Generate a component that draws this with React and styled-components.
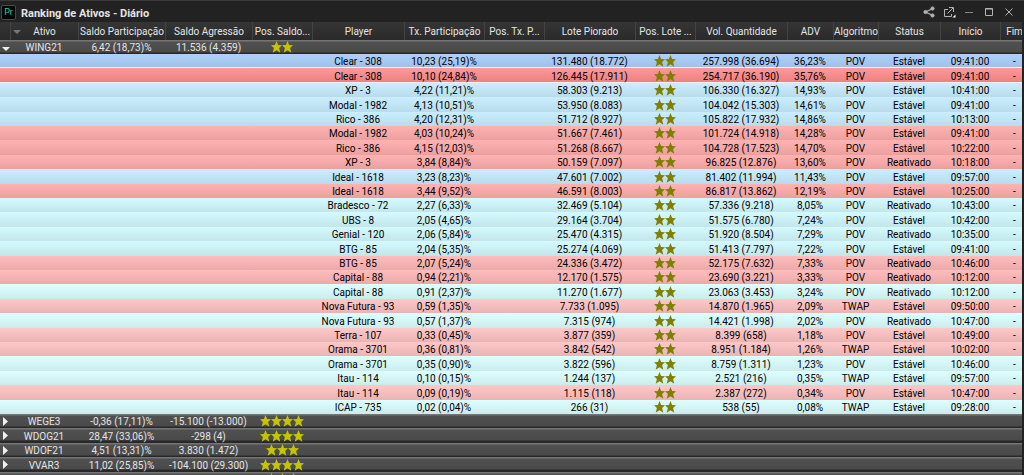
import React from 'react';
import styled, { createGlobalStyle, css } from 'styled-components';

const GlobalStyle = createGlobalStyle`
  body {
    margin: 0;
    background: #222;
  }
`;

const Window = styled.main`
  height: 100vh;
  box-sizing: border-box;
  padding-right: 2px;
  border-top: 1px solid #3a3a3a;
  overflow: hidden;
  background: #222;
  color: #e4e4e4;
  font-family: Roboto, sans-serif;
  font-size: 10px;
`;

const TitleBar = styled.header`
  display: flex;
  align-items: center;
  height: 21px;
  box-sizing: border-box;
  padding: 1px 3px 0 1px;
`;

const Logo = styled.span`
  display: grid;
  place-items: center;
  width: 13px;
  height: 13px;
  border: 1px solid #4a4a4a;
  border-radius: 2px;
  background: #050505;
  color: #1fd0a0;
  font-size: 9px;
`;

const Title = styled.h1`
  flex: 1;
  margin: 0 0 0 5px;
  padding-top: 3px;
  font-size: 11px;
  line-height: 16px;
`;

const WindowButton = styled.button`
  display: grid;
  place-items: center;
  width: 20px;
  height: 20px;
  padding: 0;
  border: 0;
  background: none;
  color: #b4b4b4;
`;

const Table = styled.table`
  width: 100%;
  table-layout: fixed;
  border-collapse: separate;
  border-spacing: 0;
  line-height: 12px;
`;

const HeadCell = styled.th`
  height: 18px;
  padding: 2px 0 0;
  box-sizing: border-box;
  overflow: hidden;
  border-left: 1px solid #444;
  background: linear-gradient(#353535, #2a2a2a);
  font-weight: normal;
  white-space: nowrap;

  &:first-child {
    border-left: 0;
  }

  &:last-child {
    padding-left: 6px;
  }
`;

const HeadContent = styled.span`
  display: flex;
  justify-content: center;
`;

const SortMark = styled.svg`
  position: absolute;
  left: 13px;
  margin-top: 4px;
`;

const Cell = styled.td`
  padding: 2px 0 0;
  overflow: hidden;
  text-align: center;
  white-space: nowrap;

  &:last-child {
    padding-left: 7px;
  }
`;

const IconCell = styled(Cell)`
  padding: 0;
`;

const Row = styled.tr`
  height: 14px;

  &:nth-child(5n + 2),
  &:nth-child(5n + 4) {
    height: 15px;
  }
`;

const tones = {
  blue: ['#b0d0f8', '#9cc0ea', '#e6f2fa'],
  red: ['#ff9898', '#ea8080', '#f8f0f4'],
  sky: ['#caeeff', '#b8dcea'],
  aqua: ['#d4faff', '#c2e6ea'],
  ice: ['#deffff', '#ccecec'],
  rose: ['#ffb2b2', '#eba0a0'],
  pink: ['#ffbcbc', '#ebaaaa'],
  blush: ['#ffc8c8', '#ebb4b4'],
};

// the leading tones end in a light rule
const PlayerRow = styled(Row)`
  color: #000;
  ${({ $tone }) => {
    const [top, bottom, rule = bottom] = tones[$tone];
    return css`
      background:
        linear-gradient(${rule}, ${rule}) bottom / 100% 1px no-repeat,
        linear-gradient(${top}, ${bottom});
    `;
  }}
`;

const AssetRow = styled(Row)`
  background: linear-gradient(#757575 0, #757575 1px, #505050 2px, #4a4a4a 12px, #282828 13px);
`;

const Toggle = styled.button`
  display: block;
  width: 10px;
  height: 13px;
  padding: 0;
  border: 0;
  background: none;
  color: #f0f0f0;

  svg {
    display: block;
  }
`;

const StarLine = styled.svg`
  display: block;
  margin: 0 auto;
  fill: ${({ $dim }) => ($dim ? '#808000' : '#c4c400')};
`;

const columns = [
  ['', 10],
  ['Ativo', 68],
  ['Saldo Participação', 87],
  ['Saldo Agressão', 87],
  ['Pos. Saldo...', 60],
  ['Player', 92],
  ['Tx. Participação', 80],
  ['Pos. Tx. P...', 60],
  ['Lote Piorado', 91],
  ['Pos. Lote ...', 60],
  ['Vol. Quantidade', 92],
  ['ADV', 46],
  ['Algoritmo', 45],
  ['Status', 62],
  ['Início', 60],
  ['Fim', 22],
];

const assets = [
  ['WING21', '6,42 (18,73)%', '11.536 (4.359)', 2],
  ['WEGE3', '-0,36 (17,11)%', '-15.100 (-13.000)', 4],
  ['WDOG21', '28,47 (33,06)%', '-298 (4)', 4],
  ['WDOF21', '4,51 (13,31)%', '3.830 (1.472)', 3],
  ['VVAR3', '11,02 (25,85)%', '-104.100 (29.300)', 4],
  ['', '', '', 3],
];

const players = [
  ['blue', 'Clear - 308', '10,23 (25,19)%', '131.480 (18.772)', '257.998 (36.694)', '36,23%', 'POV', 'Estável', '09:41:00'],
  ['red', 'Clear - 308', '10,10 (24,84)%', '126.445 (17.911)', '254.717 (36.190)', '35,76%', 'POV', 'Estável', '09:41:00'],
  ['sky', 'XP - 3', '4,22 (11,21)%', '58.303 (9.213)', '106.330 (16.327)', '14,93%', 'POV', 'Estável', '10:41:00'],
  ['sky', 'Modal - 1982', '4,13 (10,51)%', '53.950 (8.083)', '104.042 (15.303)', '14,61%', 'POV', 'Estável', '09:41:00'],
  ['sky', 'Rico - 386', '4,20 (12,31)%', '51.712 (8.927)', '105.822 (17.932)', '14,86%', 'POV', 'Estável', '10:13:00'],
  ['rose', 'Modal - 1982', '4,03 (10,24)%', '51.667 (7.461)', '101.724 (14.918)', '14,28%', 'POV', 'Estável', '09:41:00'],
  ['rose', 'Rico - 386', '4,15 (12,03)%', '51.268 (8.667)', '104.728 (17.523)', '14,70%', 'POV', 'Estável', '10:22:00'],
  ['rose', 'XP - 3', '3,84 (8,84)%', '50.159 (7.097)', '96.825 (12.876)', '13,60%', 'POV', 'Reativado', '10:18:00'],
  ['sky', 'Ideal - 1618', '3,23 (8,23)%', '47.601 (7.002)', '81.402 (11.994)', '11,43%', 'POV', 'Estável', '09:57:00'],
  ['rose', 'Ideal - 1618', '3,44 (9,52)%', '46.591 (8.003)', '86.817 (13.862)', '12,19%', 'POV', 'Estável', '10:25:00'],
  ['aqua', 'Bradesco - 72', '2,27 (6,33)%', '32.469 (5.104)', '57.336 (9.218)', '8,05%', 'POV', 'Reativado', '10:43:00'],
  ['aqua', 'UBS - 8', '2,05 (4,65)%', '29.164 (3.704)', '51.575 (6.780)', '7,24%', 'POV', 'Estável', '10:42:00'],
  ['aqua', 'Genial - 120', '2,06 (5,84)%', '25.470 (4.315)', '51.920 (8.504)', '7,29%', 'POV', 'Reativado', '10:35:00'],
  ['aqua', 'BTG - 85', '2,04 (5,35)%', '25.274 (4.069)', '51.413 (7.797)', '7,22%', 'POV', 'Estável', '09:41:00'],
  ['pink', 'BTG - 85', '2,07 (5,24)%', '24.336 (3.472)', '52.175 (7.632)', '7,33%', 'POV', 'Reativado', '10:46:00'],
  ['pink', 'Capital - 88', '0,94 (2,21)%', '12.170 (1.575)', '23.690 (3.221)', '3,33%', 'POV', 'Reativado', '10:12:00'],
  ['ice', 'Capital - 88', '0,91 (2,37)%', '11.270 (1.677)', '23.063 (3.453)', '3,24%', 'POV', 'Reativado', '10:12:00'],
  ['blush', 'Nova Futura - 93', '0,59 (1,35)%', '7.733 (1.095)', '14.870 (1.965)', '2,09%', 'TWAP', 'Estável', '09:50:00'],
  ['ice', 'Nova Futura - 93', '0,57 (1,37)%', '7.315 (974)', '14.421 (1.998)', '2,02%', 'POV', 'Reativado', '10:47:00'],
  ['blush', 'Terra - 107', '0,33 (0,45)%', '3.877 (359)', '8.399 (658)', '1,18%', 'POV', 'Estável', '10:49:00'],
  ['blush', 'Orama - 3701', '0,36 (0,81)%', '3.842 (542)', '8.951 (1.184)', '1,26%', 'TWAP', 'Estável', '10:02:00'],
  ['ice', 'Orama - 3701', '0,35 (0,90)%', '3.822 (596)', '8.759 (1.311)', '1,23%', 'POV', 'Estável', '10:46:00'],
  ['ice', 'Itau - 114', '0,10 (0,15)%', '1.244 (137)', '2.521 (216)', '0,35%', 'TWAP', 'Estável', '09:57:00'],
  ['blush', 'Itau - 114', '0,09 (0,19)%', '1.115 (118)', '2.387 (272)', '0,34%', 'POV', 'Estável', '10:47:00'],
  ['ice', 'ICAP - 735', '0,02 (0,04)%', '266 (31)', '538 (55)', '0,08%', 'TWAP', 'Estável', '09:28:00'],
];

const Stars = ({ count, dim }) => (
  <StarLine $dim={dim} width={count * 11} height="12" viewBox={`0 0 ${count * 11} 12`} role="img" aria-label={`${count} estrelas`}>
    {Array.from({ length: count }, (_, i) => (
      <path key={i} transform={`translate(${i * 11} 0)`} d="M5.5 0 L7.1 4 L11 4.2 L8.1 7.1 L9.3 11.8 L5.5 9.2 L1.7 11.8 L2.9 7.1 L0 4.2 L3.9 4 Z" />
    ))}
  </StarLine>
);

const Asset = ({ data, open }) => {
  const [name, share, balance, stars] = data;
  return (
    <AssetRow>
      <IconCell>
        <Toggle aria-label={name || 'Expandir'} aria-expanded={!!open}>
          <svg width="10" height="13" fill="currentColor">
            <path d={open ? 'M2 6 H10 L6 10 Z' : 'M3 2 L8 6.5 L3 11 Z'} />
          </svg>
        </Toggle>
      </IconCell>
      <Cell>{name}</Cell>
      <Cell>{share}</Cell>
      <Cell>{balance}</Cell>
      <IconCell><Stars count={stars} /></IconCell>
      <Cell colSpan={11} />
    </AssetRow>
  );
};

const App = () => (
  <Window>
    <GlobalStyle />
    <TitleBar>
      <Logo>Pr</Logo>
      <Title>Ranking de Ativos - Diário</Title>
      <WindowButton aria-label="Compartilhar">
        <svg width="12" height="12" fill="currentColor" stroke="currentColor">
          <path d="M10 2.5 L2.5 6 L10 9.5" fill="none" strokeWidth="1.3" />
          <circle cx="9.5" cy="2.5" r="1.6" />
          <circle cx="2.5" cy="6" r="1.6" />
          <circle cx="9.5" cy="9.5" r="1.6" />
        </svg>
      </WindowButton>
      <WindowButton aria-label="Destacar">
        <svg width="13" height="12" fill="none" stroke="currentColor">
          <path d="M5 3.5 H1.5 V10.5 H8.5 V8" />
          <path d="M4.5 7.5 L10 2 M6 1.5 H10.5 V6" />
          <path d="M12.5 8.5 V11.5 H9.5 Z" fill="#fff" stroke="none" />
        </svg>
      </WindowButton>
      <WindowButton aria-label="Minimizar">
        <svg width="8" height="8" stroke="#888"><path d="M0 4.5 H8" /></svg>
      </WindowButton>
      <WindowButton aria-label="Maximizar">
        <svg width="8" height="8" fill="none" stroke="currentColor"><path d="M0.5 0.5 H7.5 V7.5 H0.5 Z M0.5 1 H7.5" /></svg>
      </WindowButton>
      <WindowButton aria-label="Fechar">
        <svg width="8" height="8" stroke="currentColor"><path d="M0.5 0.5 L7.5 7.5 M7.5 0.5 L0.5 7.5" /></svg>
      </WindowButton>
    </TitleBar>
    <Table>
      <colgroup>
        {columns.map(([label, width]) => <col key={label} width={width} />)}
      </colgroup>
      <thead>
        <tr>
          {columns.map(([label]) => (
            <HeadCell key={label} scope="col">
              {label === 'Ativo' && (
                <SortMark width="8" height="5" fill="#777"><path d="M0 0 H8 L4 4 Z" /></SortMark>
              )}
              <HeadContent>{label}</HeadContent>
            </HeadCell>
          ))}
        </tr>
      </thead>
      <tbody>
        <Asset data={assets[0]} open />
      </tbody>
      <tbody>
        {players.map(([tone, player, share, lot, volume, adv, algorithm, status, start]) => (
          <PlayerRow key={tone + player} $tone={tone}>
            <Cell colSpan={5} />
            <Cell>{player}</Cell>
            <Cell>{share}</Cell>
            <Cell />
            <Cell>{lot}</Cell>
            <IconCell><Stars count={2} dim /></IconCell>
            <Cell>{volume}</Cell>
            <Cell>{adv}</Cell>
            <Cell>{algorithm}</Cell>
            <Cell>{status}</Cell>
            <Cell>{start}</Cell>
            <Cell>-</Cell>
          </PlayerRow>
        ))}
      </tbody>
      <tbody>
        {assets.slice(1).map((asset) => <Asset key={asset[0]} data={asset} />)}
      </tbody>
    </Table>
  </Window>
);

export default App;
